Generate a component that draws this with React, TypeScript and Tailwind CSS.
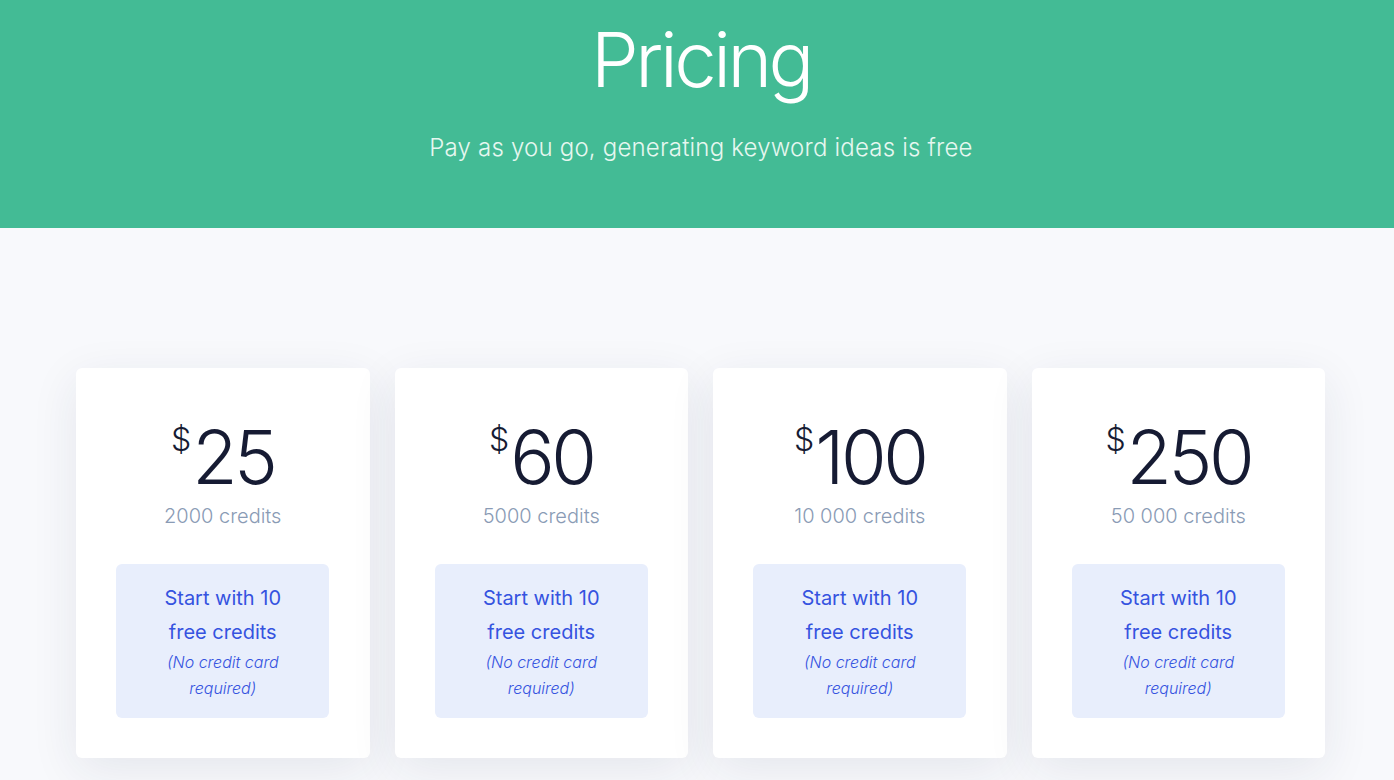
import React from "react";

const plans = [
  { price: "25", credits: "2000 credits" },
  { price: "60", credits: "5000 credits" },
  { price: "100", credits: "10 000 credits" },
  { price: "250", credits: "50 000 credits" },
];

export default function App() {
  return (
    <div className="min-h-[780px] bg-[#f8f9fc] font-['Inter',sans-serif]">
      <header className="h-[228px] bg-[#43bb95] flex flex-col items-center pt-[11px] pl-[8px]">
        <h1 className="text-[76px] leading-[96px] font-light text-white tracking-[-3.5px]">Pricing</h1>
        <p className="mt-[25px] text-[24px] leading-[32px] font-light text-[#e6f7f0] tracking-[0.2px]">
          Pay as you go, generating keyword ideas is free
        </p>
      </header>
      <main className="pt-[140px] pl-[76px]">
        <div className="grid grid-cols-[repeat(4,293.5px)] gap-x-[25px]">
          {plans.map((p) => (
            <div
              key={p.price}
              className="h-[390px] bg-white rounded-[6px] shadow-[0_12px_48px_rgba(30,40,80,0.09)] flex flex-col items-center pt-[48px]"
            >
              <div className="flex items-start text-[#161b33]">
                <span className="text-[32px] leading-[40px] font-light mt-[4px] mr-[1px]">$</span>
                <span className="text-[74px] leading-[82px] font-light tracking-[-3.5px]">{p.price}</span>
              </div>
              <div className="mt-[4px] text-[20px] leading-[28px] text-[#8a9bb5] font-light">{p.credits}</div>
              <div className="mt-[34px] w-[213px] h-[154px] rounded-[6px] bg-[#e8eefc] flex flex-col items-center pt-[17px] text-center">
                <div className="text-[20px] leading-[34px] text-[#3553e0] px-[28px]">Start with 10 free credits</div>
                <div className="text-[16px] leading-[26px] italic text-[#3553e0] px-[40px] font-light">
                  (No credit card required)
                </div>
              </div>
            </div>
          ))}
        </div>
      </main>
    </div>
  );
}
